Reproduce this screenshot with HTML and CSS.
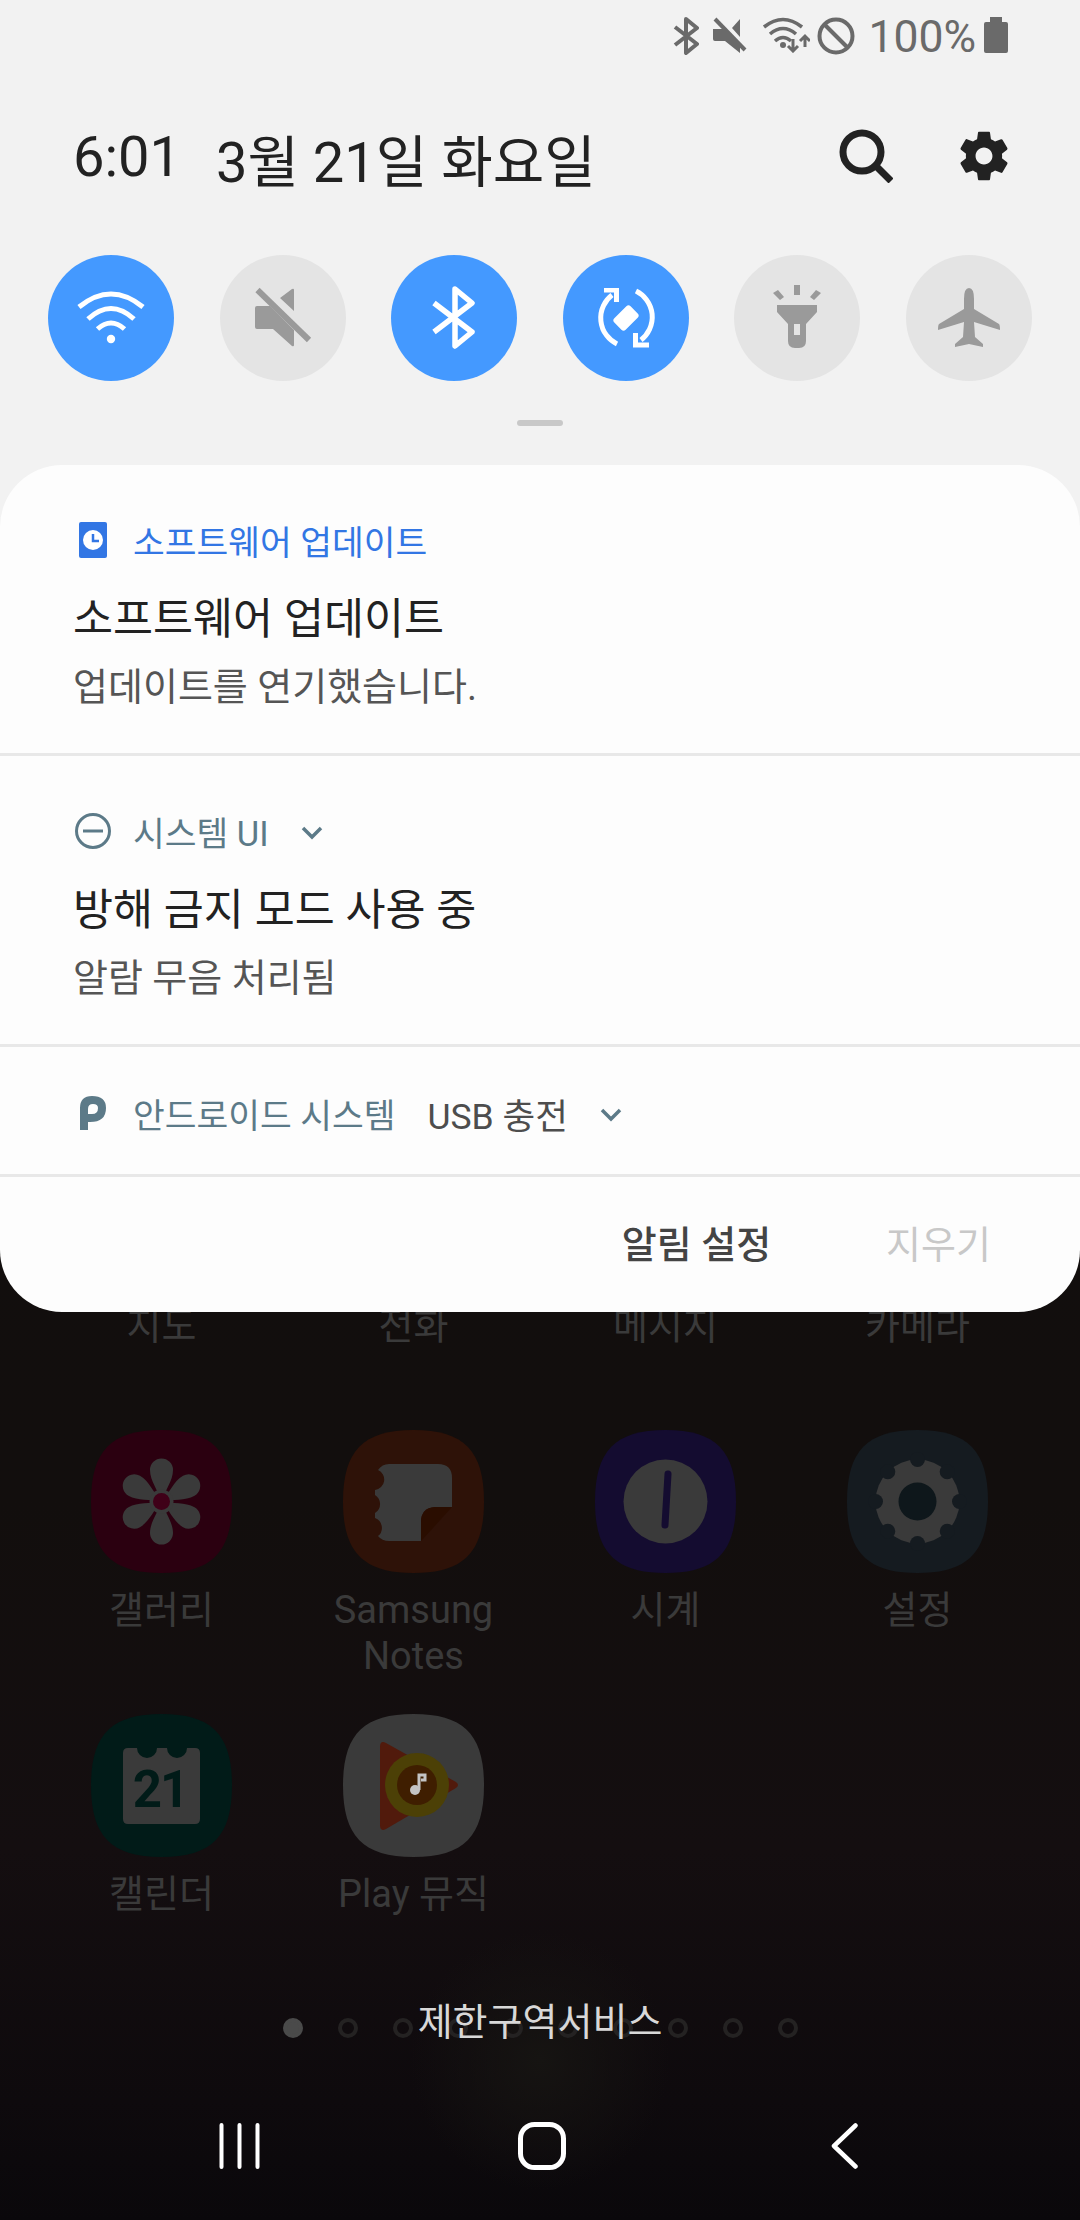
FILE: index.html
```html
<!DOCTYPE html>
<html lang="ko">
<head>
<meta charset="utf-8">
<title>Notification shade</title>
<link rel="stylesheet" href="styles.css">
</head>
<body>
<svg class="defs" width="0" height="0" aria-hidden="true">
  <symbol id="squircle" viewBox="0 0 141 143"><path d="M70.5 0C121 0 141 21 141 71.5S121 143 70.5 143 0 122 0 71.5 20 0 70.5 0Z"/></symbol>
  <symbol id="bt" viewBox="0 0 26 38"><path d="M2 10l22 17-11 9V2l11 9L2 28" fill="none" stroke="currentColor" stroke-width="4" stroke-linejoin="round"/></symbol>
</svg>
<main class="screen">
  <section class="home">
    <div class="dock-labels">
      <span class="label">지도</span><span class="label">전화</span><span class="label">메시지</span><span class="label">카메라</span>
    </div>
    <div class="apps">
      <div class="app">
        <svg class="app-icon" viewBox="0 0 141 143">
          <use href="#squircle" fill="#2b0010"/>
          <g fill="#3a3a3a">
            <path id="petal" d="M70.5 71.5C67 60 59 51 59 40a11.5 11.5 0 0 1 23 0C82 51 74 60 70.5 71.5Z"/>
            <path d="M70.5 71.5C67 60 59 51 59 40a11.5 11.5 0 0 1 23 0C82 51 74 60 70.5 71.5Z" transform="rotate(60 70.5 71.5)"/>
            <path d="M70.5 71.5C67 60 59 51 59 40a11.5 11.5 0 0 1 23 0C82 51 74 60 70.5 71.5Z" transform="rotate(120 70.5 71.5)"/>
            <path d="M70.5 71.5C67 60 59 51 59 40a11.5 11.5 0 0 1 23 0C82 51 74 60 70.5 71.5Z" transform="rotate(180 70.5 71.5)"/>
            <path d="M70.5 71.5C67 60 59 51 59 40a11.5 11.5 0 0 1 23 0C82 51 74 60 70.5 71.5Z" transform="rotate(240 70.5 71.5)"/>
            <path d="M70.5 71.5C67 60 59 51 59 40a11.5 11.5 0 0 1 23 0C82 51 74 60 70.5 71.5Z" transform="rotate(300 70.5 71.5)"/>
            <circle cx="70.5" cy="71.5" r="12"/>
          </g>
          <circle cx="70.5" cy="71.5" r="8.5" fill="#3f0018"/>
        </svg>
        <span class="label">갤러리</span>
      </div>
      <div class="app">
        <svg class="app-icon" viewBox="0 0 141 143">
          <use href="#squircle" fill="#2e1208"/>
          <path d="M46 34H95Q109 34 109 48V77H92Q78 78 78 92V111H46Q39 111 35 106A10.5 10.5 0 0 0 32 88V83A10.5 10.5 0 0 0 32 65V60A10.5 10.5 0 0 0 35 40Q39 34 46 34Z" fill="#3a3a3a"/>
          <path d="M92 77H109L80 109 78 111V92Q78 78 92 77Z" fill="#2a0d00"/>
        </svg>
        <span class="label">Samsung<br>Notes</span>
      </div>
      <div class="app">
        <svg class="app-icon" viewBox="0 0 141 143">
          <use href="#squircle" fill="#140c30"/>
          <circle cx="70.5" cy="71.5" r="42" fill="#3a3a3a"/>
          <path d="M73 44L70 95" stroke="#140c30" stroke-width="7" stroke-linecap="round"/>
        </svg>
        <span class="label">시계</span>
      </div>
      <div class="app">
        <svg class="app-icon" viewBox="0 0 141 143">
          <use href="#squircle" fill="#151b20"/>
          <circle cx="70.5" cy="71.5" r="42" fill="#3a3a3a"/>
          <g fill="#151b20">
            <circle cx="70.5" cy="29.5" r="7.5"/>
            <circle cx="70.5" cy="29.5" r="7.5" transform="rotate(45 70.5 71.5)"/>
            <circle cx="70.5" cy="29.5" r="7.5" transform="rotate(90 70.5 71.5)"/>
            <circle cx="70.5" cy="29.5" r="7.5" transform="rotate(135 70.5 71.5)"/>
            <circle cx="70.5" cy="29.5" r="7.5" transform="rotate(180 70.5 71.5)"/>
            <circle cx="70.5" cy="29.5" r="7.5" transform="rotate(225 70.5 71.5)"/>
            <circle cx="70.5" cy="29.5" r="7.5" transform="rotate(270 70.5 71.5)"/>
            <circle cx="70.5" cy="29.5" r="7.5" transform="rotate(315 70.5 71.5)"/>
          </g>
          <circle cx="70.5" cy="71.5" r="19" fill="#0e171b"/>
        </svg>
        <span class="label">설정</span>
      </div>
      <div class="app">
        <svg class="app-icon" viewBox="0 0 141 143">
          <use href="#squircle" fill="#011b18"/>
          <path d="M37 34H46A10 10 0 0 0 66 34H76A10 10 0 0 0 96 34H104Q109 34 109 39V105Q109 110 104 110H37Q32 110 32 105V39Q32 34 37 34Z" fill="#3a3a3a"/>
          <text class="cal-num" x="69" y="93" text-anchor="middle">21</text>
        </svg>
        <span class="label">캘린더</span>
      </div>
      <div class="app">
        <svg class="app-icon" viewBox="0 0 141 143">
          <use href="#squircle" fill="#3a3a3a"/>
          <path d="M37 33Q37 26 43 29L113 68Q117 71 113 74L43 115Q37 118 37 111Z" fill="#511a0c"/>
          <circle cx="74" cy="71" r="32" fill="#4c4006"/>
          <circle cx="74" cy="71" r="20" fill="#3f1e00"/>
          <circle cx="72" cy="76" r="5" fill="#c4c4c4"/>
          <path d="M76 76V61H82V66H78" fill="none" stroke="#c4c4c4" stroke-width="3"/>
        </svg>
        <span class="label">Play 뮤직</span>
      </div>
    </div>
    <div class="pager">
      <div class="dots">
        <i class="dot on"></i><i class="dot"></i><i class="dot"></i><i class="dot"></i><i class="dot"></i><i class="dot"></i><i class="dot"></i><i class="dot"></i><i class="dot"></i><i class="dot"></i>
      </div>
      <span class="carrier">제한구역서비스</span>
    </div>
    <nav class="navbar">
      <svg class="nav-recent" viewBox="0 0 41 46"><path d="M2.5 2V44M20.5 2V44M38.5 2V44" stroke="#fff" stroke-width="4" stroke-linecap="round"/></svg>
      <svg class="nav-home" viewBox="0 0 48 48"><rect x="2.5" y="2.5" width="43" height="43" rx="14" fill="none" stroke="#fff" stroke-width="5"/></svg>
      <svg class="nav-back" viewBox="0 0 27 46"><path d="M24.5 2.5L3 23l21.5 20.5" fill="none" stroke="#fff" stroke-width="4.5" stroke-linecap="round" stroke-linejoin="round"/></svg>
    </nav>
  </section>

  <section class="shade">
    <div class="status">
      <svg class="st st-bt"><use href="#bt"/></svg>
      <svg class="st st-mute" viewBox="0 0 34 36"><path d="M0 12H8L12 12 27 28V36L12 24H2Q0 24 0 22ZM19 11L27 2 V20Z" fill="currentColor"/><path d="M2 2L32 33" stroke="currentColor" stroke-width="4"/></svg>
      <svg class="st st-wifi" viewBox="0 0 48 36"><path d="M2 10Q21-5 40 10M8 17Q21 6 34 17M13 24Q21 17 29 24" fill="none" stroke="currentColor" stroke-width="3.6"/><circle cx="21" cy="28" r="3" fill="currentColor"/><path d="M31 22V34M26 29l5 5 5-5M43 30V19M38 24l5-5 5 5" fill="none" stroke="currentColor" stroke-width="3"/></svg>
      <svg class="st st-dnd" viewBox="0 0 38 38"><circle cx="19" cy="19" r="16.5" fill="none" stroke="currentColor" stroke-width="4"/><path d="M7 7L31 31" stroke="currentColor" stroke-width="4"/></svg>
      <span class="batt-text">100%</span>
      <svg class="st st-batt" viewBox="0 0 24 36"><path d="M6 0H18V5H22Q24 5 24 7V34Q24 36 22 36H2Q0 36 0 34V7Q0 5 2 5H6Z" fill="currentColor"/></svg>
    </div>
    <header class="head">
      <span class="time">6:01</span>
      <span class="date">3월 21일 화요일</span>
      <svg class="ic-search" viewBox="0 0 54 54"><circle cx="23" cy="23" r="19" fill="none" stroke="#222" stroke-width="7"/><path d="M36 36L52 52" stroke="#222" stroke-width="7"/></svg>
      <svg class="ic-gear" viewBox="0 0 24 24"><path fill="#222" d="M19.43 12.98c.04-.32.07-.64.07-.98s-.03-.66-.07-.98l2.11-1.65c.19-.15.24-.42.12-.64l-2-3.46c-.12-.22-.39-.3-.61-.22l-2.49 1c-.52-.4-1.08-.73-1.69-.98l-.38-2.65C14.46 2.18 14.25 2 14 2h-4c-.25 0-.46.18-.49.42l-.38 2.65c-.61.25-1.17.59-1.69.98l-2.49-1c-.23-.09-.49 0-.61.22l-2 3.46c-.13.22-.07.49.12.64l2.11 1.65c-.04.32-.07.65-.07.98s.03.66.07.98l-2.11 1.65c-.19.15-.24.42-.12.64l2 3.46c.12.22.39.3.61.22l2.49-1c.52.4 1.08.73 1.69.98l.38 2.65c.03.24.24.42.49.42h4c.25 0 .46-.18.49-.42l.38-2.65c.61-.25 1.17-.59 1.69-.98l2.49 1c.23.09.49 0 .61-.22l2-3.46c.12-.22.07-.49-.12-.64l-2.11-1.65zM12 15.5c-1.93 0-3.5-1.57-3.5-3.5s1.57-3.5 3.5-3.5 3.5 1.57 3.5 3.5-1.57 3.5-3.5 3.5z"/></svg>
    </header>
    <div class="qs">
      <div class="tile on"><svg viewBox="0 0 70 70"><path d="M3 24Q35-2 67 24M12 36Q35 15 58 36M21.5 46Q35 34 48.5 46" fill="none" stroke="#fff" stroke-width="5"/><circle cx="35" cy="56" r="4.2" fill="#fff"/></svg></div>
      <div class="tile"><svg viewBox="0 0 70 70"><path d="M9 23H22L46 47V62Q46 64 44 63L25 46H9Q7 46 7 44V25Q7 23 9 23ZM32 15L44 6Q46 5 46 7V28Z" fill="#9a9a9a"/><path d="M9.5 7L61 57" stroke="#9a9a9a" stroke-width="6"/></svg></div>
      <div class="tile on"><svg viewBox="0 0 70 70"><path d="M15 20L53 49 36 63V6L53 20 15 49" fill="none" stroke="#fff" stroke-width="5.5" stroke-linejoin="round"/></svg></div>
      <div class="tile on"><svg viewBox="0 0 70 70"><rect x="23.5" y="27" width="23" height="16" rx="3" fill="#fff" transform="rotate(-45 35 35)"/><path d="M21 12A29 29 0 0 0 26 61M45 8A29 29 0 0 1 50 57" fill="none" stroke="#fff" stroke-width="5"/><path d="M13 5H28V19H23V9.500H13ZM42 50H47V59.500H58V64.500H42Z" fill="#fff"/></svg></div>
      <div class="tile"><svg viewBox="0 0 70 70"><path d="M32 2H38V12H32ZM11 10L16 7 22 14 18 17ZM54 7L59 10 52 17 48 14ZM15 22H55V29L44 41V58Q44 65 37 65H33Q26 65 26 58V41L15 29Z" fill="#9a9a9a"/><rect x="32" y="41" width="6" height="11" fill="#e4e4e4"/></svg></div>
      <div class="tile"><svg viewBox="0 0 70 70"><path d="M35 5Q40 5 40 16V26L65 41Q66 42 66 47L40 39 41 54 49 61V64L35 61 21 64V61L29 54 30 39 4 47Q4 42 5 41L30 26V16Q30 5 35 5Z" fill="#9a9a9a"/></svg></div>
    </div>
    <div class="handle"></div>
    <div class="panel">
      <article class="note">
        <div class="note-app blue">
          <svg class="note-ic" viewBox="0 0 36 36"><rect x="4" y="0" width="28" height="36" rx="2" fill="#3276e4"/><circle cx="18" cy="18" r="10" fill="#fff"/><path d="M18 12V19H24" fill="none" stroke="#3276e4" stroke-width="2.500"/></svg>
          <span>소프트웨어 업데이트</span>
        </div>
        <h2 class="note-title">소프트웨어 업데이트</h2>
        <p class="note-body">업데이트를 연기했습니다.</p>
      </article>
      <article class="note">
        <div class="note-app slate">
          <svg class="note-ic" viewBox="0 0 36 36"><circle cx="18" cy="18" r="16.500" fill="none" stroke="#5c7a88" stroke-width="3"/><path d="M8 18H28" stroke="#5c7a88" stroke-width="3"/></svg>
          <span>시스템 UI</span>
          <svg class="chev" viewBox="0 0 22 14"><path d="M2 2L11 11 20 2" fill="none" stroke="#5c7a88" stroke-width="3.500"/></svg>
        </div>
        <h2 class="note-title">방해 금지 모드 사용 중</h2>
        <p class="note-body">알람 무음 처리됨</p>
      </article>
      <article class="note note-row">
        <div class="note-app slate">
          <svg class="note-ic" viewBox="0 0 36 36"><path fill-rule="evenodd" d="M5 35V13Q5 1 17 1 31 1 31 13 31 27 15 27H13V35ZM13 19H17Q23 19 23 13 23 9 18 9 13 9 13 14Z" fill="#5c7a88"/></svg>
          <span>안드로이드 시스템</span>
          <span class="usb">USB 충전</span>
          <svg class="chev" viewBox="0 0 22 14"><path d="M2 2L11 11 20 2" fill="none" stroke="#5c7a88" stroke-width="3.500"/></svg>
        </div>
      </article>
      <div class="actions">
        <span class="act-settings">알림 설정</span>
        <span class="act-clear">지우기</span>
      </div>
    </div>
  </section>
</main>
</body>
</html>
```
FILE: styles.css
```css
* { box-sizing: border-box; }
html, body { margin: 0; padding: 0; }
body { width: 1080px; height: 2220px; overflow: hidden; background: #0d0a0c; font-family: Roboto, "Noto Sans CJK KR", sans-serif; }
.defs { position: absolute; }
.screen { position: relative; width: 1080px; height: 2220px; overflow: hidden; }

/* home screen under the shade */
.home {
  height: 2220px;
  padding-top: 1305px;
  display: flex;
  flex-direction: column;
  align-items: center;
  background:
    radial-gradient(circle at 540px 2060px, #161412 0, rgba(22,20,18,0) 130px),
    linear-gradient(180deg, #110e0d 0, #120e0d 1500px, #140e10 1850px, #0e0a0d 2100px, #0a080b 2220px);
}
.label { display: block; width: 252px; text-align: center; font-size: 38px; line-height: 46px; color: #3a3a3a; }
.dock-labels { display: grid; grid-template-columns: repeat(4, 252px); width: 1008px; height: 125px; margin-left: -1px; }
.dock-labels .label { width: auto; line-height: 42px; }
.apps { display: grid; grid-template-columns: repeat(4, 252px); grid-auto-rows: 284px; width: 1008px; margin-left: -1px; }
.app { display: flex; flex-direction: column; align-items: center; }
.app-icon { width: 141px; height: 143px; margin-bottom: 14px; display: block; }
.cal-num { font: 700 51px Roboto, sans-serif; letter-spacing: -2px; fill: #011b18; }
.pager { position: relative; height: 46px; width: 1080px; display: flex; align-items: center; justify-content: center; }
.dots { display: flex; gap: 35px; margin-top: 14px; }
.dot { width: 20px; height: 20px; border-radius: 50%; border: 4px solid #242222; display: block; }
.dot.on { background: #4a4a4a; border-color: #4a4a4a; }
.carrier { position: absolute; left: 0; right: 0; top: 1px; text-align: center; font-size: 38px; line-height: 46px; color: #d8d8d8; }
.navbar { margin-top: auto; margin-bottom: 50px; width: 1080px; height: 48px; position: relative; display: flex; align-items: center; }
.nav-recent { width: 41px; height: 46px; margin-left: 219px; }
.nav-home { width: 48px; height: 48px; margin-left: 258px; }
.nav-back { width: 27px; height: 46px; margin-left: 265px; }

/* notification shade */
.shade {
  position: absolute;
  left: 0; top: 0;
  width: 1080px;
  background: linear-gradient(#f2f2f2 0, #f2f2f2 600px, transparent 600px);
}
.status { height: 102px; padding: 17px 72px 0 0; display: flex; justify-content: flex-end; align-items: flex-start; color: #6a6a6a; }
.st { display: block; color: #6a6a6a; }
.st-bt { width: 26px; height: 38px; }
.st-mute { width: 34px; height: 36px; margin-left: 14px; }
.st-wifi { width: 48px; height: 36px; margin-left: 15px; }
.st-dnd { width: 38px; height: 38px; margin-left: 7px; }
.batt-text { font-size: 44.5px; line-height: 38px; margin: 1px 0 0 13px; }
.st-batt { width: 24px; height: 36px; margin-left: 8px; }
.head { height: 110px; padding: 0 72px 0 73px; display: flex; align-items: center; color: #222; }
.time { font-size: 56px; }
.date { font-size: 56px; margin-left: 35px; }
.ic-search { width: 54px; height: 54px; margin-left: auto; margin-top: -3px; }
.ic-gear { width: 58px; height: 58px; margin-left: 62px; margin-right: -5px; margin-top: -2px; }
.qs { margin-top: 43px; padding-left: 48px; display: flex; gap: 45.6px; height: 126px; }
.tile { width: 126px; height: 126px; border-radius: 50%; background: #e4e4e4; display: flex; align-items: center; justify-content: center; flex: none; }
.tile.on { background: #4499ff; }
.tile svg { width: 70px; height: 70px; display: block; }
.handle { width: 46px; height: 6px; border-radius: 3px; background: #c8c8c8; margin: 39px auto; }
.panel { height: 847px; background: #fdfdfd; border-radius: 62px; overflow: hidden; display: flex; flex-direction: column; }
.note { height: 291px; padding: 0 73px; border-bottom: 3px solid #e8e8e8; }
.note-row { height: 130px; }
.note-app { display: flex; align-items: center; height: 36px; font-size: 34.5px; margin-top: 57px; }
.note-row .note-app { margin-top: 48px; }
.note-app span { margin-left: 24px; }
.note-ic { width: 36px; height: 36px; margin-left: 2px; margin-right: -2px; flex: none; }
.blue { color: #3276e4; }
.slate { color: #5c7a88; }
.note-app .usb { color: #4d4d4d; margin-left: 32px; font-size: 35.5px; }
.chev { width: 22px; height: 14px; margin-left: 32px; margin-top: 4px; }
.note-title { margin: 0; padding-top: 35px; font-size: 43.5px; font-weight: 400; line-height: 54px; color: #222; }
.note-body { margin: 15px 0 0; font-size: 38px; line-height: 50px; color: #555; }
.actions { flex: 1; display: flex; justify-content: flex-end; align-items: center; padding-right: 89px; font-size: 38px; padding-bottom: 6px; }
.act-settings { font-weight: 500; color: #444; }
.act-clear { color: #c8c8c8; margin-left: 115px; }
```
